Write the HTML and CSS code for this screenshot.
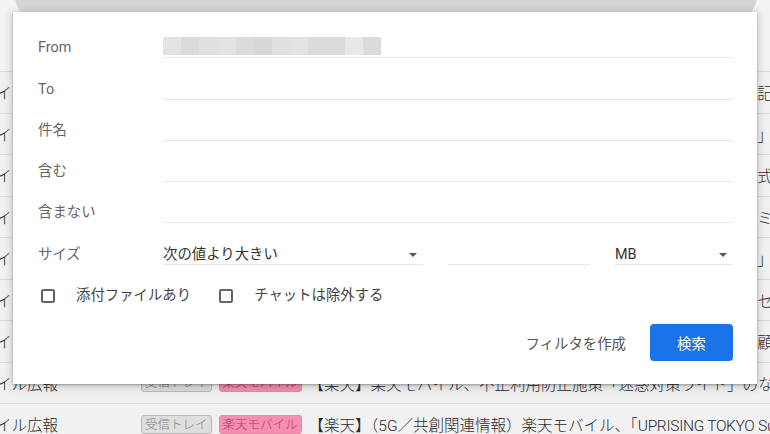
FILE: index.html
```html
<!DOCTYPE html>
<html lang="ja">

<head>
  <meta charset="UTF-8">
  <meta name="viewport" content="width=device-width, initial-scale=1.0">
  <title>高度な検索</title>
  <link rel="stylesheet" href="styles.css">
</head>

<body>
  <div class="page">
    <header class="top">
      <div class="search-bar"></div>
    </header>

    <ul class="mail-list">
      <li class="mail-row"><span class="sender">イル広報</span><span class="chip inbox">受信トレイ</span><span class="chip tag">楽天モバイル</span><span class="subject">【楽天】楽天モバイル、新料金プランと各種キャンペーンのご案記念</span></li>
      <li class="mail-row"><span class="sender">イル広報</span><span class="chip inbox">受信トレイ</span><span class="chip tag">楽天モバイル</span><span class="subject">【楽天】楽天モバイル、新料金プランと各種キャンペーンのご案」：</span></li>
      <li class="mail-row"><span class="sender">イル広報</span><span class="chip inbox">受信トレイ</span><span class="chip tag">楽天モバイル</span><span class="subject">【楽天】楽天モバイル、新料金プランと各種キャンペーンのご案式）</span></li>
      <li class="mail-row"><span class="sender">イル広報</span><span class="chip inbox">受信トレイ</span><span class="chip tag">楽天モバイル</span><span class="subject">【楽天】楽天モバイル、新料金プランと各種キャンペーンのご案ミモ</span></li>
      <li class="mail-row"><span class="sender">イル広報</span><span class="chip inbox">受信トレイ</span><span class="chip tag">楽天モバイル</span><span class="subject">【楽天】楽天モバイル、新料金プランと各種キャンペーンのご案」の</span></li>
      <li class="mail-row"><span class="sender">イル広報</span><span class="chip inbox">受信トレイ</span><span class="chip tag">楽天モバイル</span><span class="subject">【楽天】楽天モバイル、新料金プランと各種キャンペーンのご案セス</span></li>
      <li class="mail-row"><span class="sender">イル広報</span><span class="chip inbox">受信トレイ</span><span class="chip tag">楽天モバイル</span><span class="subject">【楽天】楽天モバイル、新料金プランと各種キャンペーンのご案顧客</span></li>
      <li class="mail-row"><span class="sender">イル広報</span><span class="chip inbox">受信トレイ</span><span class="chip tag">楽天モバイル</span><span class="subject">【楽天】楽天モバイル、不正利用防止施策「迷惑対策ライト」のなりすまし</span></li>
      <li class="mail-row"><span class="sender">イル広報</span><span class="chip inbox">受信トレイ</span><span class="chip tag">楽天モバイル</span><span class="subject">【楽天】（5G／共創関連情報）楽天モバイル、「<span class="latin">UPRISING TOKYO Supporters</span>」</span></li>
    </ul>

    <form class="dialog">
      <div class="field">
        <label class="field-label">From</label>
        <div class="field-input">
          <span class="blur">
            <i class="s1"></i><i class="s3"></i><i class="s2"></i><i class="s1"></i><i class="s3"></i><i class="s4"></i>
            <i class="s2"></i><i class="s1"></i><i class="s3"></i><i class="s3"></i><i class="s0"></i><i class="s3"></i>
          </span>
        </div>
      </div>
      <div class="field">
        <label class="field-label">To</label>
        <div class="field-input"></div>
      </div>
      <div class="field">
        <label class="field-label">件名</label>
        <div class="field-input"></div>
      </div>
      <div class="field">
        <label class="field-label">含む</label>
        <div class="field-input"></div>
      </div>
      <div class="field">
        <label class="field-label">含まない</label>
        <div class="field-input"></div>
      </div>
      <div class="field">
        <label class="field-label">サイズ</label>
        <div class="size-group">
          <div class="field-input select wide">次の値より大きい<span class="caret"></span></div>
          <div class="field-input num"></div>
          <div class="field-input select unit">MB<span class="caret"></span></div>
        </div>
      </div>

      <div class="checks">
        <label class="check"><span class="box"></span>添付ファイルあり</label>
        <label class="check"><span class="box"></span>チャットは除外する</label>
      </div>

      <div class="actions">
        <button type="button" class="btn-text">フィルタを作成</button>
        <button type="button" class="btn-primary">検索</button>
      </div>
    </form>
  </div>
</body>

</html>
```

FILE: styles.css
```css
* {
  margin: 0;
  padding: 0;
  box-sizing: border-box;
}

body {
  overflow: hidden;
  background: #f6f6f6;
  font-family: Roboto, "Noto Sans CJK JP", sans-serif;
  color: #222;
}

.page {
  position: relative;
  height: 434px;
  overflow: hidden;
}

/* background mail list */

.top {
  height: 71px;
  overflow: hidden;
  background: #f3f3f3;
}

.search-bar {
  height: 60px;
  margin: -40px 13px 0 15px;
  background: #d5d5d5;
  border-radius: 24px;
}

.mail-list {
  list-style: none;
  border-top: 1px solid #d8d8d8;
}

.mail-row {
  display: flex;
  align-items: center;
  height: 41.5px;
  border-bottom: 1px solid #d8d8d8;
  background: #f1f1f1;
  font-size: 15.5px;
  font-weight: 300;
  color: #2a2a2a;
  white-space: nowrap;
  overflow: hidden;
}

.sender {
  flex: none;
  width: 145px;
  margin-left: -4px;
}

.chip {
  flex: none;
  font-size: 12.5px;
  line-height: 17px;
  padding: 0 3px;
  border: 1px solid;
  border-radius: 3px;
  margin-right: 7px;
}

.chip.inbox {
  background: #dedede;
  border-color: #b9b9b9;
  color: #808080;
}

.chip.tag {
  background: #f48fb1;
  border-color: #ec86a9;
  color: #b43a66;
}

.subject {
  flex: 1;
  overflow: hidden;
}

.subject .latin {
  letter-spacing: -0.3px;
}

/* advanced search dialog */

.dialog {
  position: absolute;
  top: 12px;
  left: 13px;
  width: 744px;
  padding: 5px 24px 23px 25px;
  background: #fff;
  box-shadow: 0 1px 2px rgba(0, 0, 0, .3), 0 2px 8px 2px rgba(0, 0, 0, .15);
  font-size: 14.4px;
}

.field {
  display: flex;
  align-items: flex-end;
  height: 41.25px;
}

.field-label {
  flex: none;
  width: 125px;
  line-height: 18px;
  border-bottom: 1px solid transparent;
  color: #666;
}

.field-input {
  flex: 1;
  height: 21px;
  line-height: 18px;
  padding-top: 2px;
  border-bottom: 1px solid #e8e8e8;
}

.field-input:has(.blur) {
  padding-top: 0;
}

.blur {
  display: flex;
  width: 218px;
  height: 18px;
}

.blur i {
  flex: 1;
}

.blur .s0 { background: #e8e8e8; }
.blur .s1 { background: #e3e3e3; }
.blur .s2 { background: #e0e0e0; }
.blur .s3 { background: #dbdbdb; }
.blur .s4 { background: #d7d7d7; }

.size-group {
  flex: 1;
  display: flex;
  gap: 25px;
}

.select {
  display: flex;
  align-items: center;
  justify-content: space-between;
  color: #333;
}

.select.wide {
  flex: none;
  width: 260px;
}

.field-input.num {
  flex: none;
  width: 142px;
}

.caret {
  width: 0;
  height: 0;
  margin-right: 6px;
  border-left: 4px solid transparent;
  border-right: 4px solid transparent;
  border-top: 4px solid #555;
}

.checks {
  display: flex;
  align-items: center;
  height: 20px;
  margin-top: 21px;
  padding-left: 3px;
  color: #444;
}

.check {
  display: flex;
  align-items: center;
  gap: 21px;
  line-height: 20px;
}

.check + .check {
  margin-left: 28px;
}

.box {
  width: 14px;
  height: 14px;
  border: 2px solid #666;
  border-radius: 2px;
}

.actions {
  display: flex;
  justify-content: flex-end;
  align-items: center;
  gap: 24px;
  margin-top: 18px;
}

.actions button {
  font: inherit;
  border: none;
  cursor: pointer;
}

.btn-text {
  background: none;
  color: #555;
}

.btn-primary {
  width: 83px;
  height: 37px;
  background: #1a73e8;
  color: #fff;
  border-radius: 4px;
}
```
